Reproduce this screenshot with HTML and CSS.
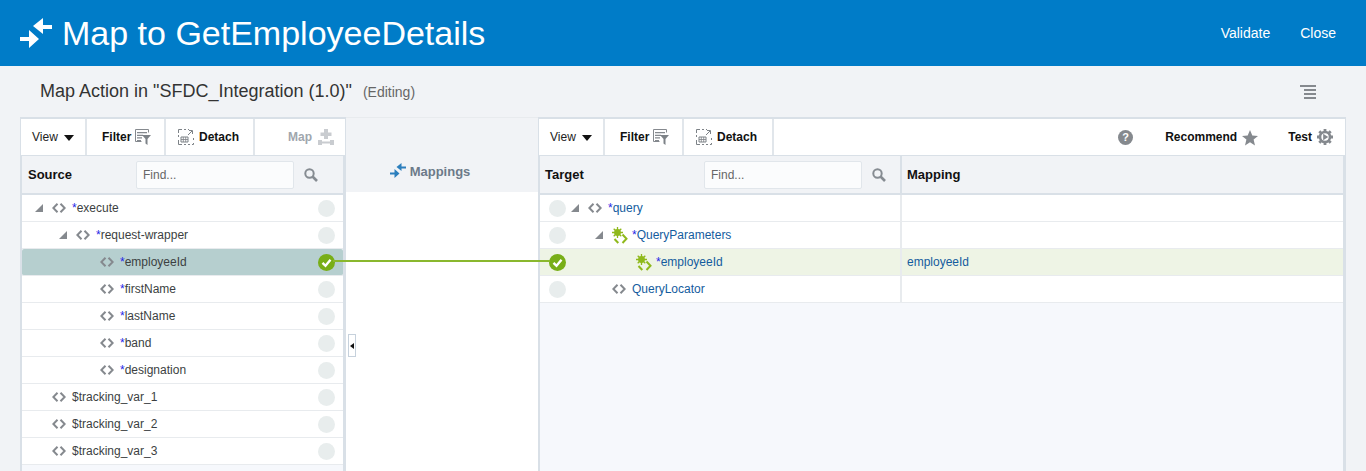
FILE: index.html
```html
<!DOCTYPE html>
<html lang="en">
<head>
<meta charset="utf-8">
<title>Map to GetEmployeeDetails</title>
<link rel="stylesheet" href="styles.css">
</head>
<body>
<svg class="sprite" aria-hidden="true">
  <symbol id="code" viewBox="0 0 14 10"><path d="M5.500 .7 1.300 5l4.200 4.300M8.500 .7 12.700 5 8.500 9.300" fill="none" stroke="#85898e" stroke-width="2"/></symbol>
  <symbol id="gen" viewBox="0 0 16 17"><circle cx="5.500" cy="5.500" r="3.400" fill="#8fb91c"/><path d="M5.500 0v11M0 5.500h11M1.700 1.700l7.600 7.600M9.300 1.700l-7.600 7.600" stroke="#8fb91c" stroke-width="1.300"/><path d="M10.500 7.500l4 4.300-4 4.200M2.500 12l3.800 4" fill="none" stroke="#8fb91c" stroke-width="2"/></symbol>
  <symbol id="filter" viewBox="0 0 16 16"><path d="M.5.500h13v3M.5.500v12h6" fill="none" stroke="#85898e"/><path d="M2 3h10v1.300H2zM2 5.700h6V7H2zM2 8.300h5v1.300H2zM2 11h4v1.300H2z" fill="#85898e"/><path d="M7 6h9l-3.500 4v6l-2-1.500V10z" fill="#7d8287"/></symbol>
  <symbol id="detach" viewBox="0 0 16 16"><path d="M.5 4V.5H4M6 .5h2M.5 6v2M.5 11v4.500H4M6 15.500h2M10 15.500h2M14 15.500h1.500V14M15.500 11V9M10 .5h1" fill="none" stroke="#7d8287"/><path d="M10 6l4-4M11 1.500h3.500V5" fill="none" stroke="#7d8287"/><path d="M3 8h7v5H3z" fill="#fff" stroke="#7d8287"/><path d="M3 10.500h7M5.300 8v5M7.700 8v5" stroke="#7d8287" stroke-width=".8"/></symbol>
  <symbol id="search" viewBox="0 0 14 14"><circle cx="5.500" cy="5.500" r="4.200" fill="none" stroke="#868c92" stroke-width="2"/><path d="M8.500 8.500l4.500 4.500" stroke="#868c92" stroke-width="2.600"/></symbol>
  <symbol id="check" viewBox="0 0 17 17"><circle cx="8.500" cy="8.500" r="8.500" fill="#78ae17"/><path d="M4.500 8.800l3 3 5-6" fill="none" stroke="#fff" stroke-width="2.400"/></symbol>
  <symbol id="arrows" viewBox="0 0 32 30"><path d="M32 7H23V0L13 8l10 8v-5h9zM0 19h9v-7l10 9-10 9v-7H0z" fill="currentColor"/></symbol>
</svg>

<header class="topbar">
  <div class="topbar-title">
    <svg class="topbar-icon"><use href="#arrows"/></svg>
    <h1>Map to GetEmployeeDetails</h1>
  </div>
  <nav class="topbar-actions"><span>Validate</span><span>Close</span></nav>
</header>

<div class="subbar">
  <div class="subbar-title"><h2>Map Action in "SFDC_Integration (1.0)"</h2><span class="subbar-state">(Editing)</span></div>
  <svg class="menu-icon" viewBox="0 0 16 14"><path d="M0 1h16M4 5h12M4 9h12M4 13h12" stroke="#85898e" stroke-width="2"/></svg>
</div>

<main class="workspace">
  <section class="panel panel-source">
    <div class="toolbar">
      <div class="tool tool-view">View<span class="caret"></span></div>
      <div class="tool tool-filter">Filter<svg class="ico16"><use href="#filter"/></svg></div>
      <div class="tool tool-detach"><svg class="ico16"><use href="#detach"/></svg>Detach</div>
      <div class="tool tool-map">Map
        <svg class="ico16" viewBox="0 0 16 16"><path d="M6 0h4v3.500h3.500v3.500H10v3H6V7H2.500V3.500H6z" fill="#c9ccd0"/><path d="M0 11h4v1.500h8V11h4v5h-4v-1.500H4V16H0z" fill="#c9ccd0"/></svg>
      </div>
    </div>
    <div class="panel-body">
      <div class="colhead">
        <div class="colhead-main">
          <strong>Source</strong>
          <div class="find find-source">Find...</div>
          <svg class="ico14"><use href="#search"/></svg>
        </div>
      </div>
      <div class="row l0"><span class="tog"></span><svg class="code"><use href="#code"/></svg><span class="name"><i>*</i>execute</span><span class="dot"></span></div>
      <div class="row l1"><span class="tog"></span><svg class="code"><use href="#code"/></svg><span class="name"><i>*</i>request-wrapper</span><span class="dot"></span></div>
      <div class="row l2 selected"><span class="tog none"></span><svg class="code"><use href="#code"/></svg><span class="name"><i>*</i>employeeId</span><svg class="dot-check"><use href="#check"/></svg></div>
      <div class="row l2"><span class="tog none"></span><svg class="code"><use href="#code"/></svg><span class="name"><i>*</i>firstName</span><span class="dot"></span></div>
      <div class="row l2"><span class="tog none"></span><svg class="code"><use href="#code"/></svg><span class="name"><i>*</i>lastName</span><span class="dot"></span></div>
      <div class="row l2"><span class="tog none"></span><svg class="code"><use href="#code"/></svg><span class="name"><i>*</i>band</span><span class="dot"></span></div>
      <div class="row l2"><span class="tog none"></span><svg class="code"><use href="#code"/></svg><span class="name"><i>*</i>designation</span><span class="dot"></span></div>
      <div class="row l0"><span class="tog none"></span><svg class="code"><use href="#code"/></svg><span class="name">$tracking_var_1</span><span class="dot"></span></div>
      <div class="row l0"><span class="tog none"></span><svg class="code"><use href="#code"/></svg><span class="name">$tracking_var_2</span><span class="dot"></span></div>
      <div class="row l0"><span class="tog none"></span><svg class="code"><use href="#code"/></svg><span class="name">$tracking_var_3</span><span class="dot"></span></div>
    </div>
  </section>

  <section class="middle">
    <div class="middle-head"><svg class="middle-icon"><use href="#arrows"/></svg><span>Mappings</span></div>
    <div class="middle-body"></div>
    <div class="splitter"><span></span></div>
  </section>

  <section class="panel panel-target">
    <div class="toolbar">
      <div class="tool tool-view">View<span class="caret"></span></div>
      <div class="tool tool-filter">Filter<svg class="ico16"><use href="#filter"/></svg></div>
      <div class="tool tool-detach"><svg class="ico16"><use href="#detach"/></svg>Detach</div>
      <div class="toolbar-right">
        <span class="help">?</span>
        <span class="tool-plain tool-rec">Recommend<svg class="ico16 star" viewBox="0 0 16 16"><path d="M8 0l2.300 5.500 5.700.4-4.400 3.700 1.400 5.800L8 12.300 3 15.400l1.400-5.800L0 5.900l5.700-.4z" fill="#85898e"/></svg></span>
        <span class="tool-plain tool-test">Test<svg class="ico16" viewBox="0 0 16 16"><circle cx="8" cy="8" r="5" fill="none" stroke="#85898e" stroke-width="2.600"/><path d="M8 0v3M8 13v3M0 8h3M13 8h3M2.300 2.300l2.200 2.200M11.500 11.500l2.200 2.200M13.700 2.300l-2.200 2.200M4.500 11.500l-2.200 2.200" stroke="#85898e" stroke-width="2.800"/><path d="M6.200 4.700l5 3.300-5 3.300z" fill="#85898e"/></svg></span>
      </div>
    </div>
    <div class="panel-body">
      <div class="colhead">
        <div class="colhead-main">
          <strong>Target</strong>
          <div class="find find-target">Find...</div>
          <svg class="ico14"><use href="#search"/></svg>
        </div>
        <div class="colhead-map"><strong>Mapping</strong></div>
      </div>
      <div class="trow"><div class="row target l0"><span class="dot"></span><span class="tog"></span><svg class="code"><use href="#code"/></svg><span class="name"><i>*</i>query</span></div><div class="mapcell"></div></div>
      <div class="trow"><div class="row target l1"><span class="dot"></span><span class="tog"></span><svg class="gen"><use href="#gen"/></svg><span class="name"><i>*</i>QueryParameters</span></div><div class="mapcell"></div></div>
      <div class="trow mapped"><div class="row target l2"><svg class="dot-check"><use href="#check"/></svg><span class="tog none"></span><svg class="gen"><use href="#gen"/></svg><span class="name"><i>*</i>employeeId</span></div><div class="mapcell">employeeId</div></div>
      <div class="trow"><div class="row target l1"><span class="dot"></span><span class="tog none"></span><svg class="code"><use href="#code"/></svg><span class="name">QueryLocator</span></div><div class="mapcell"></div></div>
    </div>
  </section>

  <div class="connector"></div>
</main>
</body>
</html>
```
FILE: styles.css
```css
* { box-sizing: border-box; }
html, body { margin: 0; height: 471px; overflow: hidden; }
body {
  display: flex;
  flex-direction: column;
  background: #f1f3f6;
  font-family: "Liberation Sans", Arial, sans-serif;
  color: #333;
}
.sprite { display: none; }

.topbar {
  height: 66px;
  flex: none;
  background: #007cc8;
  color: #fff;
  display: flex;
  align-items: center;
  justify-content: space-between;
  padding: 0 30px 0 20px;
}
.topbar-title { display: flex; align-items: center; gap: 10px; }
.topbar-icon { width: 32px; height: 30px; color: #fff; }
.topbar h1 { margin: 0; font-size: 34px; font-weight: 400; line-height: 40px; }
.topbar-actions { display: flex; gap: 30px; font-size: 14px; }

.subbar {
  height: 51px;
  flex: none;
  display: flex;
  align-items: center;
  justify-content: space-between;
  padding: 0 50px 0 40px;
}
.subbar-title { display: flex; align-items: baseline; gap: 11px; }
.subbar h2 { margin: 0; font-size: 18px; font-weight: 400; color: #333; }
.subbar-state { font-size: 14px; color: #666; }
.menu-icon { width: 16px; height: 14px; }

.workspace {
  position: relative;
  flex: 1;
  min-height: 0;
  display: flex;
  padding: 0 20px;
}
.panel { display: flex; flex-direction: column; border-top: 2px solid #d9e0e7; }
.panel-source { width: 326px; flex: none; }
.panel-target { flex: 1; min-width: 0; }

.toolbar {
  height: 36px;
  flex: none;
  display: flex;
  background: #fff;
  border-left: 1px solid #d9e0e7;
  border-right: 1px solid #d9e0e7;
  font-size: 12px;
  font-weight: 700;
  color: #111;
}
.tool {
  display: flex;
  align-items: center;
  border-right: 2px solid #e1e6eb;
}
.tool-view { width: 66px; padding-left: 11px; font-weight: 400; color: #222; }
.tool-filter { width: 79px; padding-left: 15px; gap: 4px; }
.tool-detach { width: 90px; padding-left: 12px; gap: 5px; }
.panel-source .tool-detach { width: 89px; }
.tool-map { flex: 1; border-right: 0; justify-content: flex-end; padding-right: 11px; gap: 6px; color: #a0a6ad; }
.caret {
  width: 0;
  height: 0;
  margin-left: 6px;
  margin-top: 1px;
  border-left: 5px solid transparent;
  border-right: 5px solid transparent;
  border-top: 6px solid #111;
}
.ico16 { width: 16px; height: 16px; flex: none; }
.ico14 { width: 14px; height: 14px; flex: none; }

.toolbar-right { flex: 1; display: flex; align-items: center; justify-content: flex-end; padding-right: 12px; }
.tool-plain { display: flex; align-items: center; gap: 5px; }
.star { margin-top: 1px; }
.tool-rec { margin-left: 32px; }
.tool-test { margin-left: 30px; }
.help {
  width: 15px;
  height: 15px;
  border-radius: 50%;
  background: #85898e;
  color: #fff;
  font-size: 11px;
  line-height: 15px;
  text-align: center;
}

.panel-body {
  flex: 1;
  min-height: 0;
  background: #f6f8fc;
  border-left: 2px solid #d9e0e7;
  border-right: 3px solid #d9e0e7;
  border-top: 1px solid #d9e0e7;
}
.colhead {
  height: 39px;
  display: flex;
  background: #f1f3f6;
  border-bottom: 2px solid #d9e0e7;
  font-size: 13px;
  color: #111;
}
.colhead-main {
  flex: 1;
  min-width: 0;
  display: flex;
  align-items: center;
  padding-left: 6px;
}
.panel-source .colhead-main strong { width: 108px; }
.panel-target .colhead-main strong { width: 162px; padding-left: 3px; }
.panel-target .colhead-main { padding-left: 2px; }
.colhead-map {
  width: 443px;
  flex: none;
  display: flex;
  align-items: center;
  padding-left: 5px;
  border-left: 2px solid #d9e0e7;
}
.find {
  width: 158px;
  height: 28px;
  flex: none;
  margin-right: 10px;
  padding-left: 6px;
  background: #fbfcfd;
  border: 1px solid #e1e6eb;
  border-radius: 2px;
  font-size: 12px;
  line-height: 26px;
  color: #666;
}

.row {
  height: 27px;
  display: flex;
  align-items: center;
  background: #fff;
  border-bottom: 1px solid #e8ebee;
  font-size: 12px;
  color: #3c3f42;
}
.row.l0 { padding-left: 13px; }
.row.l1 { padding-left: 37px; }
.row.l2 { padding-left: 61px; }
.row.selected { background: #b6cfcf; border-radius: 2px; }
.tog { width: 17px; height: 8px; flex: none; background: linear-gradient(#85898e, #85898e) 0 0 / 8px 8px no-repeat; clip-path: polygon(8px 0, 8px 8px, 0 8px); }
.tog.none { background: none; clip-path: none; }
.code { width: 14px; height: 10px; margin-right: 6px; flex: none; }
.gen { width: 16px; height: 17px; margin-right: 4px; flex: none; }
.name { flex: 1; min-width: 0; }
.name i { font-style: normal; color: #2626e6; }
.dot { width: 17px; height: 17px; flex: none; border-radius: 50%; background: #e8eded; margin-right: 8px; }
.dot-check { width: 17px; height: 17px; flex: none; margin-right: 8px; }

.row.target { flex: 1; min-width: 0; border-bottom: 0; }
.row.target.l0, .row.target.l1, .row.target.l2 { padding-left: 9px; }
.row.target .dot, .row.target .dot-check { margin-right: 5px; }
.row.target.l1 .tog { margin-left: 24px; }
.row.target.l2 .tog { margin-left: 48px; }
.row.target .name { color: #145c9e; }
.trow { height: 27px; display: flex; background: #fff; border-bottom: 1px solid #e8ebee; }
.trow .row { height: 26px; }
.trow.mapped, .trow.mapped .row { background: #eef4e5; }
.mapcell {
  width: 443px;
  flex: none;
  padding-left: 5px;
  border-left: 2px solid #e8ebee;
  font-size: 12px;
  line-height: 26px;
  color: #145c9e;
}

.middle { position: relative; width: 192px; flex: none; display: flex; flex-direction: column; border-top: 1px solid #e8ebee; }
.middle-head {
  height: 74px;
  flex: none;
  display: flex;
  align-items: flex-end;
  justify-content: center;
  gap: 4px;
  padding: 0 24px 13px 0;
  font-size: 13px;
  font-weight: 700;
  color: #6c7a89;
}
.middle-icon { width: 16px; height: 17px; color: #2c7fbd; }
.middle-body { flex: 1; background: #fff; }
.splitter {
  position: absolute;
  left: 2px;
  top: 216px;
  width: 8px;
  height: 23px;
  background: #fff;
  border: 1px solid #c6d1dc;
  display: flex;
  align-items: center;
  justify-content: center;
}
.splitter span {
  width: 0;
  height: 0;
  border-top: 3px solid transparent;
  border-bottom: 3px solid transparent;
  border-right: 4px solid #111;
}
.connector {
  position: absolute;
  left: 333px;
  top: 143px;
  width: 217px;
  height: 2px;
  background: #8ab82e;
}
```
